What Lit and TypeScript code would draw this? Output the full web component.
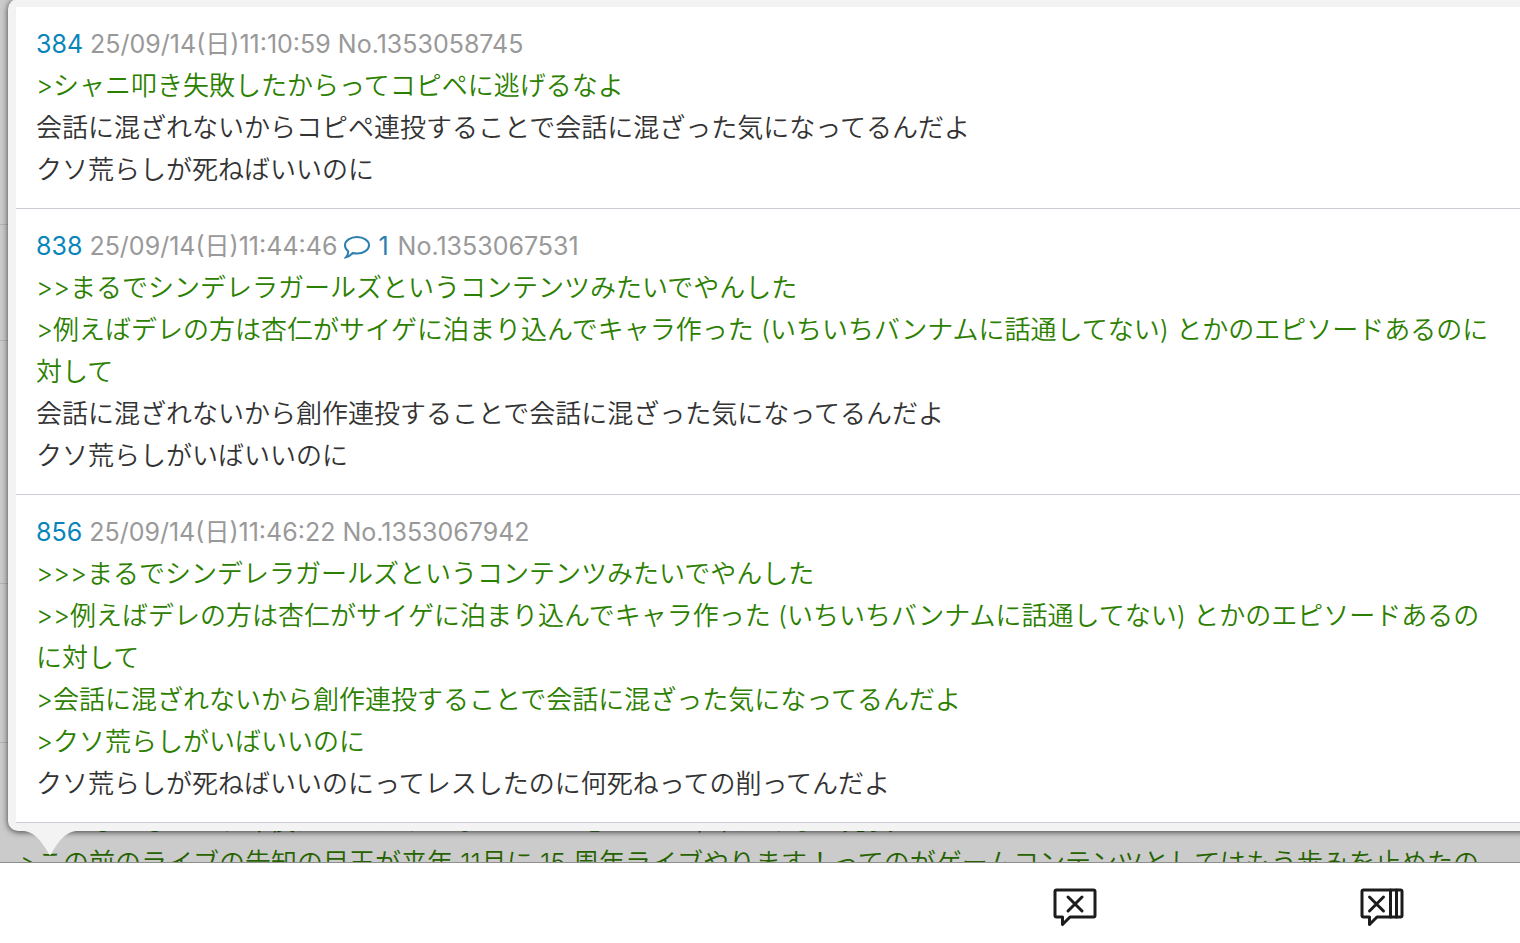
import { LitElement, html, css, svg } from "lit";
import { customElement } from "lit/decorators.js";

interface Line { text: string; quote?: boolean }
interface Post { id: string; date: string; replies?: number; no: string; lines: Line[] }

const q = (text: string): Line => ({ text, quote: true });
const t = (text: string): Line => ({ text });

const POSTS: Post[] = [
  { id: "384", date: "25/09/14(日)11:10:59", no: "No.1353058745", lines: [
    q(">シャニ叩き失敗したからってコピペに逃げるなよ"),
    t("会話に混ざれないからコピペ連投することで会話に混ざった気になってるんだよ"),
    t("クソ荒らしが死ねばいいのに") ] },
  { id: "838", date: "25/09/14(日)11:44:46", replies: 1, no: "No.1353067531", lines: [
    q(">>まるでシンデレラガールズというコンテンツみたいでやんした"),
    q(">例えばデレの方は杏仁がサイゲに泊まり込んでキャラ作った (いちいちバンナムに話通してない) とかのエピソードあるのに対して"),
    t("会話に混ざれないから創作連投することで会話に混ざった気になってるんだよ"),
    t("クソ荒らしがいばいいのに") ] },
  { id: "856", date: "25/09/14(日)11:46:22", no: "No.1353067942", lines: [
    q(">>>まるでシンデレラガールズというコンテンツみたいでやんした"),
    q(">>例えばデレの方は杏仁がサイゲに泊まり込んでキャラ作った (いちいちバンナムに話通してない) とかのエピソードあるのに対して"),
    q(">会話に混ざれないから創作連投することで会話に混ざった気になってるんだよ"),
    q(">クソ荒らしがいばいいのに"),
    t("クソ荒らしが死ねばいいのにってレスしたのに何死ねっての削ってんだよ") ] },
];

const BUBBLE = svg`<path d="M3.500 2H40.500A1.500 1.500 0 0 1 42 3.500V27.500A1.500 1.500 0 0 1 40.500 29H17L9.500 36.500V29H3.500A1.500 1.500 0 0 1 2 27.500V3.500A1.500 1.500 0 0 1 3.500 2Z"/>`;

@customElement("app-root")
export class AppRoot extends LitElement {
  static styles = css`
    :host {
      display: flex;
      flex-direction: column;
      height: 100vh;
      overflow: hidden;
      background: #fff;
      color: #333;
      font: 26px/42px Inter, "Noto Sans CJK JP", sans-serif;
    }
    .page {
      flex: 1;
      min-height: 0;
      position: relative;
      overflow: hidden;
      display: flex;
      flex-direction: column;
      justify-content: flex-end;
      background: #cbcbcb;
      border-bottom: 1px solid #8e8e8e;
    }
    .row { flex: none; border-bottom: 1px solid #b3b3bb; }
    .r1 { height: 115px; }
    .r2 { height: 242px; }
    .r3 { height: 158px; }
    .thread {
      height: 119px;
      flex: none;
      display: flex;
      flex-direction: column;
      justify-content: flex-end;
      padding-left: 20px;
      white-space: nowrap;
      font-weight: 350;
      color: #266300;
    }
    .thread p { margin: 0; height: 42px; }
    .thread p:first-child { padding-left: 44px; }
    .thread p:last-child { height: 20px; }
    .popover {
      position: absolute;
      top: -1px;
      left: 8px;
      right: -16px;
      padding: 8px 16px 8px 8px;
      background: #f3f3f3;
      border-radius: 10px;
      box-shadow: 0 1px 6px rgba(0, 0, 0, 0.7);
    }
    .tail {
      position: absolute;
      top: 100%;
      left: 16px;
      width: 52px;
      height: 24px;
      fill: #f3f3f3;
    }
    .post {
      background: #fff;
      border-bottom: 1px solid #cdcdd6;
      padding: 17px 20px;
    }
    .meta { color: #999; display: flex; font-size: 25px; line-height: 41px; }
    .meta > * { white-space: pre; }
    a { color: #0785bb; text-decoration: none; }
    .replies { display: flex; align-items: center; gap: 8px; margin: 0 9px 0 7px; color: #2d7fb0; }
    .cloud { width: 26px; height: 24px; fill: none; stroke: #2d7fb0; stroke-width: 2; }
    .post p { margin: 0; line-break: anywhere; font-weight: 350; }
    .quote { color: #2c8000; }
    .toolbar { flex: none; height: 80px; margin-right: -16px; display: grid; grid-template-columns: repeat(5, 1fr); }
    .toolbar button {
      border: 0; background: none; padding: 9px 0 0; display: grid; place-items: center;
    }
    .toolbar button:first-of-type { grid-column: 4; }
    .toolbar svg { width: 44px; height: 40px; fill: none; stroke: #1c1c1e; stroke-width: 3; stroke-linecap: round; stroke-linejoin: round; }
  `;

  private post(p: Post) {
    return html`<article class="post">
      <header class="meta"><a href="#${p.id}">${p.id}</a><span> ${p.date}</span>${p.replies
        ? html`<a class="replies" href="#replies" aria-label="replies"><svg class="cloud" viewBox="0 0 26 24"><path d="M13 2C19.500 2 25 5.500 25 10.200S19.500 18.500 13 18.500C11.500 18.500 10 18.300 8.700 18C7 20 4.800 21.700 2 22.300C3.600 20.400 4.300 18.500 4.200 16.200C2.200 14.600 1 12.600 1 10.200C1 5.500 6.500 2 13 2Z"/></svg><span>${p.replies}</span></a><span>${p.no}</span>`
        : html`<span> ${p.no}</span>`}</header>
      ${p.lines.map((l) => html`<p class=${l.quote ? "quote" : "text"}>${l.text}</p>`)}
    </article>`;
  }

  render() {
    return html`
      <main class="page">
        <div class="row"></div>
        <div class="row r1"></div>
        <div class="row r2"></div>
        <div class="row r3"></div>
        <div class="thread">
          <p>もしかしてもう今後はライブやらないのかと思ったら年末にあると発表されたので</p>
          <p>>この前のライブの告知の目玉が来年 11月に 15 周年ライブやります！ってのがゲームコンテンツとしてはもう歩みを止めたの</p>
        </div>
        <section class="popover">
          ${POSTS.map((p) => this.post(p))}
          <svg class="tail" viewBox="0 0 52 24"><path d="M0 0H52C42 1 36 9 30 18C28 21 27 24 26 24S24 21 22 18C16 9 10 1 0 0Z"/></svg>
        </section>
      </main>
      <nav class="toolbar">
        <button aria-label="Close popup"><svg viewBox="0 0 44 40">${BUBBLE}<path d="M15 9L29 23M29 9L15 23"/></svg></button>
        <button aria-label="Close all popups"><svg viewBox="0 0 44 40">${BUBBLE}<path d="M9.500 9L23.500 23M23.500 9L9.500 23M30.500 2V29M36.500 2V29"/></svg></button>
      </nav>`;
  }
}
